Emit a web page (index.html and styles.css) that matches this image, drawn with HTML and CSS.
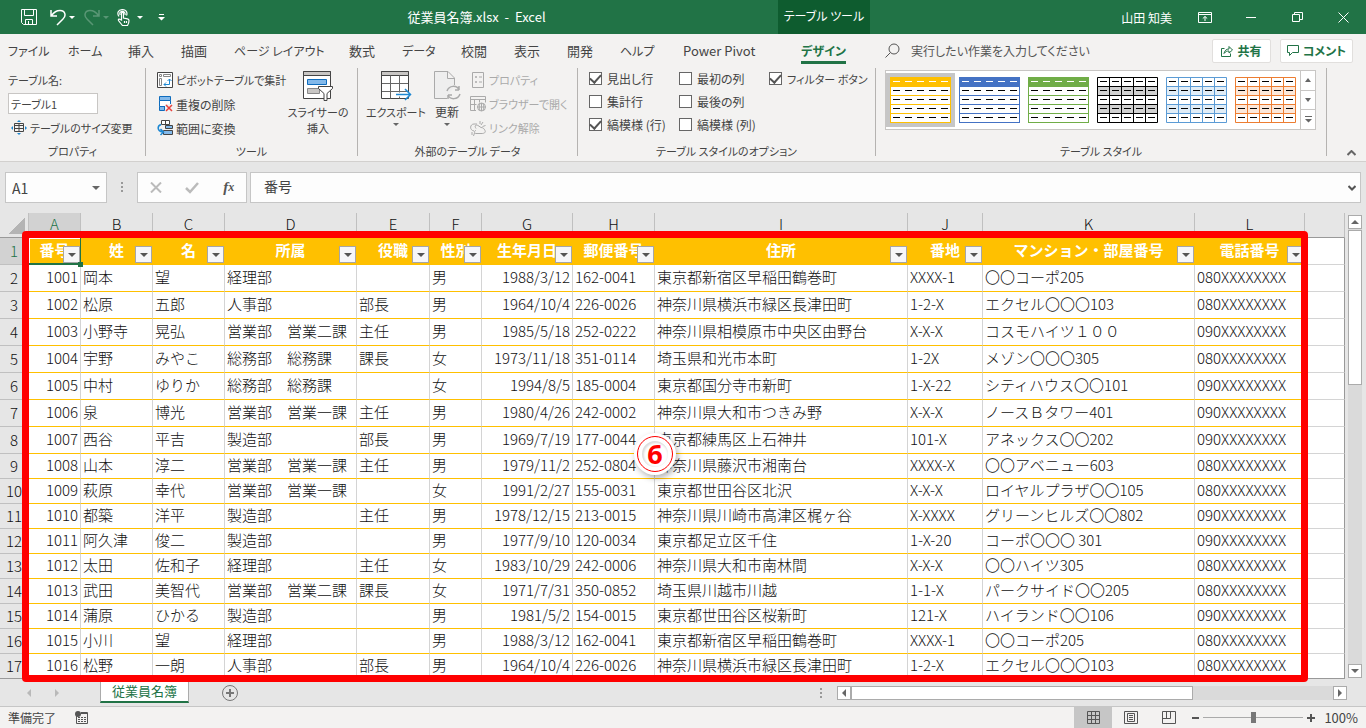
FILE: index.html
```
<!DOCTYPE html>
<html lang="ja">
<head>
<meta charset="UTF-8">
<title>従業員名簿.xlsx - Excel</title>
<link rel="stylesheet" href="styles.css">
</head>
<body>
<svg class="defs" aria-hidden="true">
	<symbol id="style_line" viewBox="0 0 61 46">
		<rect width="61" height="46" fill="currentColor"/>
		<path fill="#fff" d="M1 10h59v8H1zM1 19h59v8H1zM1 28h59v8H1zM1 37h59v8H1z"/>
		<path stroke="#fff" d="M3 4.5h7M15 4.5h7M27 4.5h7M39 4.5h7M51 4.5h7"/>
		<path stroke="#000" d="M3 13.5h7M15 13.5h7M27 13.5h7M39 13.5h7M51 13.5h7M3 22.5h7M15 22.5h7M27 22.5h7M39 22.5h7M51 22.5h7M3 31.5h7M15 31.5h7M27 31.5h7M39 31.5h7M51 31.5h7M3 40.5h7M15 40.5h7M27 40.5h7M39 40.5h7M51 40.5h7"/>
	</symbol>
	<symbol id="style_grid" viewBox="0 0 61 46">
		<rect width="61" height="46" fill="#fff"/>
		<path fill="currentColor" fill-opacity=".18" d="M1 10h59v8H1zM1 28h59v8H1z"/>
		<path stroke="currentColor" fill="none" d="M.5 .5h60v45H.5zM0 9.5h61M0 18.5h61M0 27.5h61M0 36.5h61M12.5 0v46M24.5 0v46M36.5 0v46M48.5 0v46"/>
		<path stroke="#000" d="M3 4.5h7M15 4.5h7M27 4.5h7M39 4.5h7M51 4.5h7M3 13.5h7M15 13.5h7M27 13.5h7M39 13.5h7M51 13.5h7M3 22.5h7M15 22.5h7M27 22.5h7M39 22.5h7M51 22.5h7M3 31.5h7M15 31.5h7M27 31.5h7M39 31.5h7M51 31.5h7M3 40.5h7M15 40.5h7M27 40.5h7M39 40.5h7M51 40.5h7"/>
	</symbol>
</svg>

<header class="title_bar">
	<div class="quick">
		<button aria-label="保存"><svg width="16" height="16" viewBox="0 0 16 16" fill="none" stroke="#fff"><path d="M.5 .5h15v15h-13l-2-2zM3.5 .5v6h9v-6M4.5 15.5v-5h7v5M7.5 12v3"/></svg></button>
		<button aria-label="元に戻す"><svg width="16" height="17" viewBox="0 0 16 17" fill="none" stroke="#fff" stroke-width="1.5"><path d="M1 1v6h6M1.5 6.5C4 3 7 1.500 10 1.500c6 0 6 6 3 8.500L7 16"/></svg></button>
		<i class="caret"></i>
		<button class="dim" aria-label="やり直し"><svg width="16" height="17" viewBox="0 0 16 17" fill="none" stroke="#fff" stroke-width="1.5"><path d="M15 1v6H9M14.500 6.500C12 3 9 1.500 6 1.500c-6 0-6 6-3 8.500L9 16"/></svg></button>
		<i class="caret dim"></i>
		<button aria-label="タッチ/マウス モードの切り替え"><svg width="13" height="17" viewBox="0 0 13 17" fill="none" stroke="#fff" stroke-width="1.200"><path d="M4.500 11V4.500c0-1.500 2-1.500 2 0V9l4 .8c1 .2 1.500.7 1.500 1.700 0 2-.5 3.500-1.500 5H5.500L1.500 11.500c-.5-1.500 1-1.800 1.800-1zM2 7.500C-.5 4 1.500.8 5 .6s6 2.400 4.500 6M3.200 6C2 3.500 4 2.300 5.500 2.300S8.500 4 8 6M7.500 12v2M9.500 12v2"/></svg></button>
		<i class="caret touch"></i>
		<button aria-label="クイック アクセス ツール バーのユーザー設定"><svg width="7" height="8" viewBox="0 0 7 8" fill="#fff"><path d="M1 1h5v1H1zM0 4h7L3.500 7.500z"/></svg></button>
	</div>
	<h1>従業員名簿.xlsx &nbsp;-&nbsp; Excel</h1>
	<div class="context_title">テーブル ツール</div>
	<div class="window_side">
		<span class="user">山田 知美</span>
		<button aria-label="リボンの表示オプション"><svg width="14" height="11" viewBox="0 0 14 11" fill="none" stroke="#fff"><path d="M.5 .5h13v10H.5zM.5 2.500h13M7 9V4.500M4.800 6.500L7 4.500l2.200 2"/></svg></button>
		<button aria-label="最小化"><svg width="10" height="10" viewBox="0 0 10 10" stroke="#fff"><path d="M0 5.500h10"/></svg></button>
		<button aria-label="元に戻す (縮小)"><svg width="11" height="10" viewBox="0 0 11 10" fill="none" stroke="#fff"><path d="M.5 2.500h7v7h-7zM2.500 2.500v-2h8v7h-3"/></svg></button>
		<button aria-label="閉じる"><svg width="11" height="11" viewBox="0 0 11 11" stroke="#fff"><path d="M.5 .5l10 10M10.500 .5l-10 10"/></svg></button>
	</div>
</header>

<nav class="tabs">
	<a href="#" class="kana">ファイル</a>
	<a href="#" class="kana">ホーム</a>
	<a href="#">挿入</a>
	<a href="#">描画</a>
	<a href="#" class="kana">ページ レイアウト</a>
	<a href="#">数式</a>
	<a href="#" class="kana">データ</a>
	<a href="#">校閲</a>
	<a href="#">表示</a>
	<a href="#">開発</a>
	<a href="#" class="kana">ヘルプ</a>
	<a href="#">Power Pivot</a>
	<a href="#" class="kana now">デザイン</a>
	<svg width="15" height="15" viewBox="0 0 15 15" fill="none" stroke="#555"><circle cx="9" cy="6" r="5"/><path d="M5.500 9.500L.5 14.500"/></svg>
	<input class="search" type="text" aria-label="検索" placeholder="実行したい作業を入力してください">
	<button class="share"><svg width="12" height="12" viewBox="0 0 12 12" fill="none" stroke="#217346"><path d="M3.500 3.500h-3v8h9v-3M3 8.500c.5-3 2.500-4.500 5-4.500V1.500L11.500 5 8 8V6C6 6 4.500 6.500 3 8.500z"/></svg>共有</button>
	<button class="share comment"><svg width="12" height="12" viewBox="0 0 12 12" fill="none" stroke="#217346"><path d="M.5 .5h11v7H5.500L2.500 10.500v-3h-2z"/></svg>コメント</button>
</nav>

<section class="ribbon">
	<div class="group g_prop">
		<div class="group_body">
			<label class="tool_row small" for="table_name">テーブル名:</label>
			<input id="table_name" class="table_name small" type="text" value="テーブル1">
			<button class="tool_row resize small"><svg width="16" height="16" viewBox="0 0 16 16" fill="none"><path stroke="#444" d="M3.500 3.500h9v8h-9zM3.500 5.500h9M3.500 8.500h9M8 3.500v8"/><path fill="#1e88d2" d="M8 0l2 2H6zM8 15l2-2H6zM0 8l2-2v4zM16 8l-2-2v4z"/></svg>テーブルのサイズ変更</button>
		</div>
		<div class="group_name">プロパティ</div>
	</div>
	<span class="divider"></span>

	<div class="group g_tool">
		<div class="group_body row">
			<div class="tool_list">
				<button class="tool_row small"><svg width="16" height="16" viewBox="0 0 16 16" fill="none" stroke="#444"><path fill="#fff" d="M.5 .5h15v15H.5z"/><path stroke="#888" d="M2.500 2.500h2v2h-2zM6.500 2.500h7v2h-7zM2.500 6.500h2v7h-2z"/><path stroke="#1e88d2" d="M7 12.500h5.500V7M10.500 9l2-2 2 2M9 10.500l-2 2 2 2"/></svg>ピボットテーブルで集計</button>
				<button class="tool_row"><svg width="16" height="16" viewBox="0 0 16 16" fill="none"><path fill="#83b9ea" stroke="#0f6cbd" d="M2.500 .5h11v4h-11zM2.500 10.500h5v4h-5z"/><path fill="#fff" stroke="#0f6cbd" d="M2.500 4.500h11v6h-11z"/><path fill="#f3f2f1" d="M8 8h8v8H8z"/><path stroke="#e8413d" stroke-width="1.500" d="M9 9l6 6M15 9l-6 6"/></svg>重複の削除</button>
				<button class="tool_row"><svg width="16" height="16" viewBox="0 0 16 16" fill="none"><path fill="#fff" stroke="#444" d="M4.500 .5h8v4h-8zM8.500 .5v4"/><path fill="#83b9ea" stroke="#444" d="M8.500 5.500h7v3h-7zM6.500 10.500h9v4h-9z"/><path stroke="#1e88d2" stroke-width="1.500" d="M4 4.500C0 6 0 11 5.500 12M3.500 9l3 3-3 3"/></svg>範囲に変換</button>
			</div>
			<button class="big slicer small"><svg width="30" height="31" viewBox="0 0 30 31" fill="none"><path fill="#fff" stroke="#444" d="M.5 .5h27v27H.5z"/><path fill="#c8c6c4" stroke="#444" d="M.5 .5h27v4H.5z"/><path fill="#83b9ea" stroke="#0f6cbd" d="M4.500 8.500h19v5h-19z"/><path fill="#c8c6c4" stroke="#888" d="M4.500 17.500h12v5h-12z"/><path fill="#fff" stroke="#444" d="M15.500 15.500h14v2l-5.500 5v7h-3v-7l-5.500-5z"/></svg><span>スライサーの<br>挿入</span></button>
		</div>
		<div class="group_name">ツール</div>
	</div>
	<span class="divider"></span>

	<div class="group g_ext">
		<div class="group_body row">
			<button class="big export small"><svg width="31" height="31" viewBox="0 0 31 31" fill="none"><path fill="#fff" stroke="#444" d="M.5 .5h27v27H.5z"/><path fill="#c8c6c4" stroke="#444" d="M.5 .5h27v4H.5z"/><path stroke="#666" d="M1 12.500h26M1 20.500h26M9.500 4.500v23M18.500 4.500v23"/><path stroke="#fff" stroke-width="4" d="M15 23.500h14"/><path stroke="#1e88d2" stroke-width="1.500" d="M15 23.500h15M24 18l5.500 5.500L24 29"/></svg><span>エクスポート</span><i class="caret"></i></button>
			<button class="big refresh"><svg width="27" height="31" viewBox="0 0 27 31" fill="none" stroke="#aaa"><path fill="#eee" d="M13 27.500H.5V.5H14l6.500 6.500v7M13.500 .5v7h7"/><path stroke-width="1.500" d="M13 20c2-6 10-6 12-1v-4M25 19h-4M26 23c-2 6-10 6-12 1v4M14 24h4"/></svg><span>更新</span><i class="caret"></i></button>
			<div class="tool_list off">
				<button class="tool_row small" disabled><svg width="16" height="16" viewBox="0 0 16 16" fill="none" stroke="#aaa"><path d="M2.500 .5h11v15h-11zM5.500 4.500h1v1h-1zM5.500 9.500h1v1h-1zM9 5h3M9 10h3"/></svg>プロパティ</button>
				<button class="tool_row small" disabled><svg width="16" height="16" viewBox="0 0 16 16" fill="none" stroke="#aaa"><path d="M6 14.500H.5V.5h15v6M.5 3.500h15M.5 8.500h6M4.500 3.500v11M9.500 3.500v3"/><circle cx="11.500" cy="11" r="4"/><path d="M7.500 11h8M11.500 7v8M10 7.500c-1 2-1 5 0 7M13 7.500c1 2 1 5 0 7"/></svg>ブラウザーで開く</button>
				<button class="tool_row small" disabled><svg width="16" height="16" viewBox="0 0 16 16" fill="none" stroke="#aaa"><path d="M6 8.500c-2-3 0-4 2-3l3 2c2 0 3 1 4 3s-1 3-3 3H6c-2 0-2-3 0-3M4 11c-5-1-4-7 0-7h3M10 1v3M13 2l-2 3M15.500 5.500l-3 1M2 12v3M4.500 13l-1 3"/></svg>リンク解除</button>
			</div>
		</div>
		<div class="group_name">外部のテーブル データ</div>
	</div>
	<span class="divider"></span>

	<div class="group g_opt">
		<div class="group_body options">
			<label><input type="checkbox" checked>見出し行</label>
			<label><input type="checkbox">最初の列</label>
			<label class="small"><input type="checkbox" checked>フィルター ボタン</label>
			<label><input type="checkbox">集計行</label>
			<label><input type="checkbox">最後の列</label>
			<span></span>
			<label><input type="checkbox" checked>縞模様 (行)</label>
			<label><input type="checkbox">縞模様 (列)</label>
		</div>
		<div class="group_name">テーブル スタイルのオプション</div>
	</div>
	<span class="divider"></span>

	<div class="group g_style">
		<div class="group_body">
			<div class="gallery">
				<button class="style_btn picked gold" aria-label="ゴールド"><svg width="61" height="46"><use href="#style_line"/></svg></button>
				<button class="style_btn blue" aria-label="青"><svg width="61" height="46"><use href="#style_line"/></svg></button>
				<button class="style_btn green" aria-label="緑"><svg width="61" height="46"><use href="#style_line"/></svg></button>
				<button class="style_btn black" aria-label="白黒"><svg width="61" height="46"><use href="#style_grid"/></svg></button>
				<button class="style_btn sky" aria-label="水色"><svg width="61" height="46"><use href="#style_grid"/></svg></button>
				<button class="style_btn orange" aria-label="オレンジ"><svg width="61" height="46"><use href="#style_grid"/></svg></button>
				<div class="gallery_nav">
					<button aria-label="上へ"><i class="caret up"></i></button>
					<button aria-label="下へ"><i class="caret"></i></button>
					<button aria-label="その他"><svg width="7" height="7" viewBox="0 0 7 7" fill="#666"><path d="M0 0h7v1H0zM0 3h7L3.500 6.500z"/></svg></button>
				</div>
			</div>
		</div>
		<div class="group_name">テーブル スタイル</div>
	</div>
	<span class="divider"></span>
	<button class="collapse" aria-label="リボンを折りたたむ"><svg width="9" height="6" viewBox="0 0 9 6" fill="none" stroke="#666" stroke-width="2"><path d="M.5 5l4-4 4 4"/></svg></button>
</section>

<div class="formula_bar">
	<div class="name_box"><input type="text" aria-label="名前ボックス" value="A1"><i class="caret"></i></div>
	<span class="dots"></span>
	<div class="formula_btns">
		<button aria-label="キャンセル"><svg width="12" height="11" viewBox="0 0 12 11" stroke="#bbb" stroke-width="2"><path d="M1 .5l10 10M11 .5l-10 10"/></svg></button>
		<button aria-label="入力"><svg width="14" height="12" viewBox="0 0 14 12" fill="none" stroke="#bbb" stroke-width="2.500"><path d="M1 6l4 4L13 1"/></svg></button>
		<button class="fx" aria-label="関数の挿入">f<small>x</small></button>
	</div>
	<div class="formula">
		<input type="text" aria-label="数式バー" value="番号">
		<svg width="8" height="6" viewBox="0 0 8 6" fill="none" stroke="#555" stroke-width="2"><path d="M.5 1L4 4.500 7.500 1"/></svg>
	</div>
</div>

<main class="sheet">
	<table class="cells">
		<colgroup>
			<col class="c_num"><col class="c_a"><col class="c_b"><col class="c_b"><col class="c_d"><col class="c_e"><col class="c_a"><col class="c_g"><col class="c_h"><col class="c_i"><col class="c_j"><col class="c_k"><col class="c_l"><col>
		</colgroup>
		<thead>
			<tr><th class="corner"></th><th class="on">A</th><th>B</th><th>C</th><th>D</th><th>E</th><th>F</th><th>G</th><th>H</th><th>I</th><th>J</th><th>K</th><th>L</th><th></th></tr>
		</thead>
		<tbody>
			<tr class="field">
				<th class="on">1</th>
				<td class="active">番号<button aria-label="番号"></button></td>
				<td>姓<button aria-label="姓"></button></td>
				<td>名<button aria-label="名"></button></td>
				<td>所属<button aria-label="所属"></button></td>
				<td>役職<button aria-label="役職"></button></td>
				<td>性別<button aria-label="性別"></button></td>
				<td>生年月日<button aria-label="生年月日"></button></td>
				<td>郵便番号<button aria-label="郵便番号"></button></td>
				<td>住所<button aria-label="住所"></button></td>
				<td>番地<button aria-label="番地"></button></td>
				<td>マンション・部屋番号<button aria-label="マンション・部屋番号"></button></td>
				<td>電話番号<button aria-label="電話番号"></button></td>
				<td></td>
			</tr>
			<tr><th>2</th><td>1001</td><td>岡本</td><td>望</td><td>経理部</td><td></td><td>男</td><td>1988/3/12</td><td>162-0041</td><td>東京都新宿区早稲田鶴巻町</td><td>XXXX-1</td><td>〇〇コーポ205</td><td>080XXXXXXXX</td><td></td></tr>
			<tr><th>3</th><td>1002</td><td>松原</td><td>五郎</td><td>人事部</td><td>部長</td><td>男</td><td>1964/10/4</td><td>226-0026</td><td>神奈川県横浜市緑区長津田町</td><td>1-2-X</td><td>エクセル〇〇〇103</td><td>080XXXXXXXX</td><td></td></tr>
			<tr><th>4</th><td>1003</td><td>小野寺</td><td>晃弘</td><td>営業部　営業二課</td><td>主任</td><td>男</td><td>1985/5/18</td><td>252-0222</td><td>神奈川県相模原市中央区由野台</td><td>X-X-X</td><td>コスモハイツ１００</td><td>090XXXXXXXX</td><td></td></tr>
			<tr><th>5</th><td>1004</td><td>宇野</td><td>みやこ</td><td>総務部　総務課</td><td>課長</td><td>女</td><td>1973/11/18</td><td>351-0114</td><td>埼玉県和光市本町</td><td>1-2X</td><td>メゾン〇〇〇305</td><td>080XXXXXXXX</td><td></td></tr>
			<tr><th>6</th><td>1005</td><td>中村</td><td>ゆりか</td><td>総務部　総務課</td><td></td><td>女</td><td>1994/8/5</td><td>185-0004</td><td>東京都国分寺市新町</td><td>1-X-22</td><td>シティハウス〇〇101</td><td>090XXXXXXXX</td><td></td></tr>
			<tr><th>7</th><td>1006</td><td>泉</td><td>博光</td><td>営業部　営業一課</td><td>主任</td><td>男</td><td>1980/4/26</td><td>242-0002</td><td>神奈川県大和市つきみ野</td><td>X-X-X</td><td>ノースＢタワー401</td><td>090XXXXXXXX</td><td></td></tr>
			<tr><th>8</th><td>1007</td><td>西谷</td><td>平吉</td><td>製造部</td><td>部長</td><td>男</td><td>1969/7/19</td><td>177-0044</td><td>東京都練馬区上石神井</td><td>101-X</td><td>アネックス〇〇202</td><td>090XXXXXXXX</td><td></td></tr>
			<tr class="low"><th>9</th><td>1008</td><td>山本</td><td>淳二</td><td>営業部　営業一課</td><td>主任</td><td>男</td><td>1979/11/2</td><td>252-0804</td><td>神奈川県藤沢市湘南台</td><td>XXXX-X</td><td>〇〇アベニュー603</td><td>080XXXXXXXX</td><td></td></tr>
			<tr class="low"><th>10</th><td>1009</td><td>萩原</td><td>幸代</td><td>営業部　営業一課</td><td></td><td>女</td><td>1991/2/27</td><td>155-0031</td><td>東京都世田谷区北沢</td><td>X-X-X</td><td>ロイヤルプラザ〇〇105</td><td>080XXXXXXXX</td><td></td></tr>
			<tr class="low"><th>11</th><td>1010</td><td>都築</td><td>洋平</td><td>製造部</td><td>主任</td><td>男</td><td>1978/12/15</td><td>213-0015</td><td>神奈川県川崎市高津区梶ヶ谷</td><td>X-XXXX</td><td>グリーンヒルズ〇〇802</td><td>090XXXXXXXX</td><td></td></tr>
			<tr class="low"><th>12</th><td>1011</td><td>阿久津</td><td>俊二</td><td>製造部</td><td></td><td>男</td><td>1977/9/10</td><td>120-0034</td><td>東京都足立区千住</td><td>1-X-20</td><td>コーポ〇〇〇 301</td><td>090XXXXXXXX</td><td></td></tr>
			<tr class="low"><th>13</th><td>1012</td><td>太田</td><td>佐和子</td><td>経理部</td><td>主任</td><td>女</td><td>1983/10/29</td><td>242-0006</td><td>神奈川県大和市南林間</td><td>X-X-X</td><td>〇〇ハイツ305</td><td>080XXXXXXXX</td><td></td></tr>
			<tr class="low"><th>14</th><td>1013</td><td>武田</td><td>美智代</td><td>営業部　営業二課</td><td>課長</td><td>女</td><td>1971/7/31</td><td>350-0852</td><td>埼玉県川越市川越</td><td>1-1-X</td><td>パークサイド〇〇205</td><td>080XXXXXXXX</td><td></td></tr>
			<tr class="low"><th>15</th><td>1014</td><td>蒲原</td><td>ひかる</td><td>製造部</td><td></td><td>男</td><td>1981/5/2</td><td>154-0015</td><td>東京都世田谷区桜新町</td><td>121-X</td><td>ハイランド〇〇106</td><td>090XXXXXXXX</td><td></td></tr>
			<tr class="low"><th>16</th><td>1015</td><td>小川</td><td>望</td><td>経理部</td><td></td><td>男</td><td>1988/3/12</td><td>162-0041</td><td>東京都新宿区早稲田鶴巻町</td><td>XXXX-1</td><td>〇〇コーポ205</td><td>080XXXXXXXX</td><td></td></tr>
			<tr class="low"><th>17</th><td>1016</td><td>松野</td><td>一朗</td><td>人事部</td><td>部長</td><td>男</td><td>1964/10/4</td><td>226-0026</td><td>神奈川県横浜市緑区長津田町</td><td>1-2-X</td><td>エクセル〇〇〇103</td><td>080XXXXXXXX</td><td></td></tr>
		</tbody>
	</table>
	<div class="v_scroll">
		<button aria-label="上へスクロール"><i class="caret up"></i></button>
		<div class="v_thumb"></div>
		<button aria-label="下へスクロール"><i class="caret"></i></button>
	</div>
	<!-- 説明用の枠と番号 -->
	<div class="red_frame"></div>
	<div class="step_no">6</div>
</main>

<div class="sheet_tabs">
	<div class="tab_nav"><i class="caret left"></i><i class="caret right"></i></div>
	<button class="sheet_tab">従業員名簿</button>
	<button class="add_sheet" aria-label="新しいシート"><svg width="16" height="16" viewBox="0 0 16 16" fill="none" stroke="#777"><circle cx="8" cy="8" r="7.500"/><path stroke-width="2" d="M4 8h8M8 4v8"/></svg></button>
	<span class="dots"></span>
	<div class="h_scroll">
		<button aria-label="左へスクロール"><i class="caret left"></i></button>
		<div class="h_thumb"></div>
		<button aria-label="右へスクロール"><i class="caret right"></i></button>
	</div>
</div>

<footer class="status">
	<span>準備完了</span>
	<svg width="13" height="13" viewBox="0 0 13 13" fill="none" stroke="#555"><path d="M1.500 5v7.500h11v-11H6"/><path stroke-width="2" d="M6 2h6"/><path stroke-dasharray="2 1" d="M3 6.500h8M3 8.500h8M3 10.500h8"/><circle cx="3" cy="3" r="3" fill="#555" stroke="none"/></svg>
	<div class="views">
		<button class="now" aria-label="標準"><svg width="13" height="13" viewBox="0 0 13 13" fill="none" stroke="#555"><path d="M.5 .5h12v12H.5zM.5 4.500h12M.5 8.500h12M4.500 .5v12M8.500 .5v12"/></svg></button>
		<button aria-label="ページ レイアウト"><svg width="14" height="13" viewBox="0 0 14 13" fill="none" stroke="#555"><path d="M.5 .5h13v12H.5zM3.500 2.500h7v8h-7zM5 4.500h4M5 6.500h4M5 8.500h4"/></svg></button>
		<button aria-label="改ページ プレビュー"><svg width="14" height="13" viewBox="0 0 14 13" fill="none" stroke="#555"><path d="M.5 .5h13v12H.5zM.5 7.500h8v-7M4.500 .5v7"/></svg></button>
	</div>
	<div class="zoom">
		<button class="minus" aria-label="縮小"></button>
		<input type="range" min="0" max="100" value="50" aria-label="ズーム">
		<button class="plus" aria-label="拡大"></button>
		<span>100%</span>
	</div>
</footer>
</body>
</html>
```
FILE: styles.css
```
*{
	margin:0;
	padding:0;
	box-sizing:border-box;
}
body{
	height:100vh;
	display:flex;
	flex-direction:column;
	overflow:hidden;
	background-color:#e6e6e6;
	color:#444;
	font-family:"Noto Sans CJK JP", sans-serif;
	font-size:12px;
	font-feature-settings:"palt";
}
button, input{
	border:none;
	background:none;
	color:inherit;
	font:inherit;
	font-feature-settings:inherit;
}
button{
	display:flex;
	align-items:center;
	justify-content:center;
	white-space:nowrap;
}
svg{
	flex:none;
}
.defs{
	display:none;
}
.small{
	font-size:11px;
}
.caret{
	flex:none;
	width:0;
	height:0;
	border:4px solid transparent;
	border-top-color:#666;
	border-bottom:none;
}
.caret.up{
	border-top:none;
	border-bottom:4px solid #666;
}
.caret.left{
	border:4px solid transparent;
	border-right-color:#666;
	border-left:none;
}
.caret.right{
	border:4px solid transparent;
	border-left-color:#666;
	border-right:none;
}
.dots{
	width:2px;
	height:10px;
	background:repeating-linear-gradient(#999 0 2px, transparent 2px 4px);
}

/* title bar */
.title_bar{
	flex:none;
	display:grid;
	grid-template-columns:175px 603px 92px 1fr;
	align-items:center;
	height:34px;
	background-color:#217346;
	color:#fff;
}
.quick{
	display:flex;
	align-items:center;
	padding-left:21px;
}
.quick button:nth-of-type(2){
	margin-left:13px;
}
.quick .caret{
	border-width:3px;
	border-top-color:#fff;
	border-bottom:none;
	margin:0 9px 0 3px;
}
.quick .caret.dim{
	margin-right:8px;
}
.quick .caret.touch{
	margin:0 15px 0 7px;
}
.quick .dim{
	opacity:0.25;
}
.title_bar h1{
	font-size:13px;
	font-weight:normal;
	line-height:32px;
	text-align:center;
}
.context_title{
	height:34px;
	line-height:32px;
	text-align:center;
	background-color:#0e5c2f;
}
.window_side{
	display:flex;
	align-items:center;
	justify-content:flex-end;
}
.user{
	margin-right:10px;
}
.window_side button{
	width:46px;
	height:34px;
}

/* ribbon tabs */
.tabs{
	flex:none;
	display:grid;
	grid-template-columns:60px 60px 53px 53px 115px 53px 59px 53px 53px 53px 63px 118px 84px 26px 1fr 59px 82px;
	align-items:center;
	height:33px;
	padding:0 13px 0 8px;
	background-color:#f3f2f1;
	font-size:13px;
}
.tabs a{
	justify-self:start;
	color:#444;
	line-height:20px;
	text-decoration:none;
	white-space:nowrap;
}
.tabs .kana{
	font-size:12px;
}
.tabs .now{
	margin-top:4px;
	color:#217346;
	font-weight:bold;
	border-bottom:3px solid #217346;
}
.search{
	font-size:12px;
}
.search::placeholder{
	color:#555;
	opacity:1;
}
.share{
	gap:4px;
	height:24px;
	border:1px solid #e1dfdd;
	border-radius:2px;
	background-color:#fff;
	color:#217346;
	font-size:12px;
	font-weight:bold;
}
.comment{
	margin-left:9px;
}

/* ribbon */
.ribbon{
	flex:none;
	display:flex;
	height:95px;
	background-color:#f3f2f1;
	border-bottom:1px solid #d2d0ce;
}
.divider{
	width:1px;
	margin:1px 0 5px;
	background-color:#b5b3b1;
}
.group{
	display:flex;
	flex-direction:column;
	padding-top:1px;
}
.group_body{
	height:74px;
}
.row{
	display:flex;
}
.group_name{
	font-size:11px;
	line-height:19px;
	text-align:center;
	white-space:nowrap;
}
.g_prop{
	width:145px;
}
.g_tool{
	width:211px;
}
.g_ext{
	width:219px;
}
.g_opt{
	width:297px;
}
.g_style{
	width:450px;
}
.g_prop .group_body{
	padding-left:8px;
}
.tool_row{
	display:flex;
	justify-content:flex-start;
	align-items:center;
	gap:3px;
	height:24px;
	white-space:nowrap;
}
.table_name{
	display:block;
	width:90px;
	height:21px;
	margin:1px 0 2px;
	padding-left:2px;
	border:1px solid #c8c6c4;
	background-color:#fff;
}
.resize{
	padding-left:3px;
}
.g_tool .tool_list{
	width:134px;
	padding-left:11px;
}
.big{
	flex-direction:column;
	justify-content:flex-start;
	padding-top:3px;
	line-height:16px;
}
.big span{
	margin-top:2px;
}
.big .caret{
	border-width:3px;
	border-bottom:none;
	margin-top:3px;
}
.slicer{
	width:76px;
}
.export{
	width:76px;
}
.refresh{
	width:26px;
}
.off{
	color:#aaa;
	padding-left:10px;
}
.options{
	display:grid;
	grid-template-columns:90px 90px 1fr;
	grid-template-rows:23px 23px 23px;
	padding-left:11px;
}
.g_opt{
	padding-top:0;
}
.g_opt .group_body{
	height:75px;
}
.options label{
	display:flex;
	align-items:center;
	gap:5px;
	white-space:nowrap;
}
.options input{
	appearance:none;
	display:grid;
	place-items:center;
	width:13px;
	height:13px;
	border:1px solid #666;
	background-color:#fff;
}
.options input:checked::after{
	content:"";
	width:9px;
	height:5px;
	margin-bottom:3px;
	border:solid #555;
	border-width:0 0 2px 2px;
	transform:rotate(-48deg);
}
.gallery{
	display:flex;
	width:431px;
	height:60px;
	margin:2px 0 0 9px;
	border:1px solid #c8c6c4;
	background-color:#fff;
}
.style_btn{
	width:69px;
	height:54px;
	margin-top:2px;
}
.picked{
	background-color:#c6c6c6;
}
.gold{
	color:#ffc000;
}
.blue{
	color:#4472c4;
}
.green{
	color:#70ad47;
}
.black{
	color:#000;
}
.sky{
	color:#5b9bd5;
}
.orange{
	color:#ed7d31;
}
.gallery_nav{
	flex:1;
	display:flex;
	flex-direction:column;
	border-left:1px solid #c8c6c4;
}
.gallery_nav button{
	flex:1;
}
.gallery_nav button + button{
	border-top:1px solid #c8c6c4;
}
.gallery_nav .caret{
	border-left-width:3px;
	border-right-width:3px;
}
.collapse{
	flex:1;
	align-items:flex-end;
	padding:0 0 5px 10px;
}

/* formula bar */
.formula_bar{
	flex:none;
	display:flex;
	align-items:flex-start;
	padding:10px 5px;
	height:51px;
	font-size:14px;
}
.name_box, .formula_btns, .formula{
	display:flex;
	align-items:center;
	height:31px;
	border:1px solid #c6c6c6;
	background-color:#fdfdfd;
}
.name_box{
	width:102px;
	padding:0 6px;
}
.name_box input{
	flex:1;
	min-width:0;
}
.formula_bar .dots{
	margin:10px 14px 0;
}
.formula_btns{
	width:110px;
	justify-content:space-around;
}
.fx{
	font:italic bold 15px "Liberation Serif", serif;
	color:#555;
}
.fx small{
	font-size:12px;
}
.formula{
	flex:1;
	margin-left:3px;
	padding:0 4px 0 13px;
}
.formula input{
	flex:1;
	padding-bottom:4px;
}

/* sheet */
.sheet{
	flex:1;
	min-height:0;
	display:flex;
	align-items:flex-start;
	position:relative;
}
.cells{
	flex:1;
	min-width:0;
	width:0;
	table-layout:fixed;
	border-spacing:0;
	color:#111;
	font-size:15px;
	font-weight:300;
	font-feature-settings:normal;
}
.c_num{
	width:29px;
}
.c_a{
	width:52px;
}
.c_b{
	width:72px;
}
.c_d{
	width:132px;
}
.c_e{
	width:73px;
}
.c_g{
	width:91px;
}
.c_h{
	width:82px;
}
.c_i{
	width:253px;
}
.c_j{
	width:75px;
}
.c_k{
	width:212px;
}
.c_l{
	width:110px;
}
.cells th{
	height:27px;
	font-weight:300;
	line-height:20px;
	background-color:#e6e6e6;
	border-right:1px solid #c0c0c0;
	border-bottom:1px solid #c0c0c0;
}
.cells thead th{
	height:25px;
	padding-bottom:2px;
	border-bottom-color:#999;
}
.cells .on{
	background-color:#d2d2d2;
	color:#217346;
}
.cells .corner{
	background:linear-gradient(135deg, transparent 50%, #b4b4b4 50%) 8px 4px / 17px 17px no-repeat;
}
.cells td{
	height:27px;
	padding:0 2px 2px;
	line-height:20px;
	white-space:nowrap;
	overflow:hidden;
	background-color:#fff;
	border-right:1px solid #d4d4d4;
	border-bottom:1px solid #ffc000;
}
.cells .low th, .cells .low td{
	height:25px;
}
.cells td:nth-child(2), .cells td:nth-child(8){
	text-align:right;
}
.cells td:last-child{
	border-right-color:#999;
	border-bottom-color:#d4d4d4;
}
.cells tr:last-child td, .cells tr:last-child th{
	border-bottom-color:#999;
}
.cells .field td:not(:last-child){
	position:relative;
	text-align:center;
	color:#fff;
	font-weight:bold;
	background-color:#ffc000;
	border-right-color:#ffc000;
}
.cells .field .active:not(:last-child){
	border-right-color:#217346;
	border-bottom-color:#217346;
	box-shadow:inset 0 -1px #217346, inset 1px 1px #fff;
	overflow:visible;
}
.active::after{
	content:"";
	position:absolute;
	right:-3px;
	bottom:-3px;
	z-index:1;
	width:5px;
	height:5px;
	background-color:#217346;
}
.field button{
	position:absolute;
	right:0;
	bottom:1px;
	width:17px;
	height:17px;
	border:1px solid #a6a6a6;
	background-color:#f6f6f8;
}
.field button::after{
	content:"";
	border:4px solid transparent;
	border-top-color:#555;
	border-bottom:none;
}
.v_scroll{
	flex:none;
	align-self:stretch;
	display:flex;
	flex-direction:column;
	width:14px;
	margin:2px 4px 1px 3px;
	background-color:#dadada;
}
.v_scroll button, .h_scroll button{
	flex:none;
	width:14px;
	height:14px;
	border:1px solid #ababab;
	background-color:#fff;
}
.v_thumb{
	height:155px;
	margin:1px 0 auto;
	border:1px solid #ababab;
	background-color:#fff;
}
.red_frame{
	position:absolute;
	z-index:2;
	top:18px;
	left:22px;
	width:1286px;
	height:451px;
	border:7px solid #f00;
	border-radius:4px;
	pointer-events:none;
}
.step_no{
	position:absolute;
	z-index:2;
	top:223px;
	left:637px;
	width:36px;
	height:36px;
	border:1px solid #f00;
	border-radius:50%;
	background-color:#fff;
	box-shadow:0 0 0 3px #fff, 2px 3px 6px 3px rgba(0,0,0,0.3), inset 0 0 0 4px #fff, inset 1px 1px 2px 5px #ddd;
	color:#f00;
	font:bold 27px/34px "Noto Sans", sans-serif;
	text-align:center;
}

/* sheet tabs */
.sheet_tabs{
	flex:none;
	display:flex;
	align-items:center;
	height:28px;
	padding-right:19px;
	border-bottom:1px solid #c6c6c6;
}
.tab_nav{
	display:flex;
	gap:24px;
	width:100px;
	padding-left:27px;
	opacity:0.35;
}
.sheet_tab{
	align-self:flex-start;
	width:89px;
	height:24px;
	border:1px solid #ababab;
	border-top:none;
	border-bottom:2px solid #217346;
	background-color:#fff;
	color:#217346;
	font-size:13px;
}
.add_sheet{
	margin:0 auto 0 33px;
}
.h_scroll{
	display:flex;
	width:510px;
	margin-left:15px;
	background-color:#dadada;
}
.h_thumb{
	width:342px;
	margin-right:auto;
	border:1px solid #ababab;
	background-color:#fff;
}

/* status bar */
.status{
	flex:none;
	display:flex;
	align-items:center;
	height:21px;
	padding:0 8px;
	background-color:#f3f2f1;
}
.status > svg{
	margin-left:19px;
}
.views{
	display:flex;
	margin-left:auto;
}
.views button{
	width:38px;
	height:21px;
}
.views .now{
	background-color:#c6c6c6;
}
.zoom{
	display:flex;
	align-items:center;
	margin-left:3px;
}
.zoom input{
	appearance:none;
	width:100px;
	height:1px;
	margin:0 4px;
	background-color:#aaa;
}
.zoom input::-webkit-slider-thumb{
	appearance:none;
	width:5px;
	height:11px;
	background-color:#777;
}
.zoom .minus, .zoom .plus{
	width:8px;
	height:8px;
	background:linear-gradient(#555, #555) center / 7px 2px no-repeat;
}
.zoom .plus{
	background:linear-gradient(#555, #555) center / 8px 2px no-repeat, linear-gradient(#555, #555) center / 2px 8px no-repeat;
}
.zoom span{
	width:43px;
	text-align:right;
	font-size:13px;
}
```
